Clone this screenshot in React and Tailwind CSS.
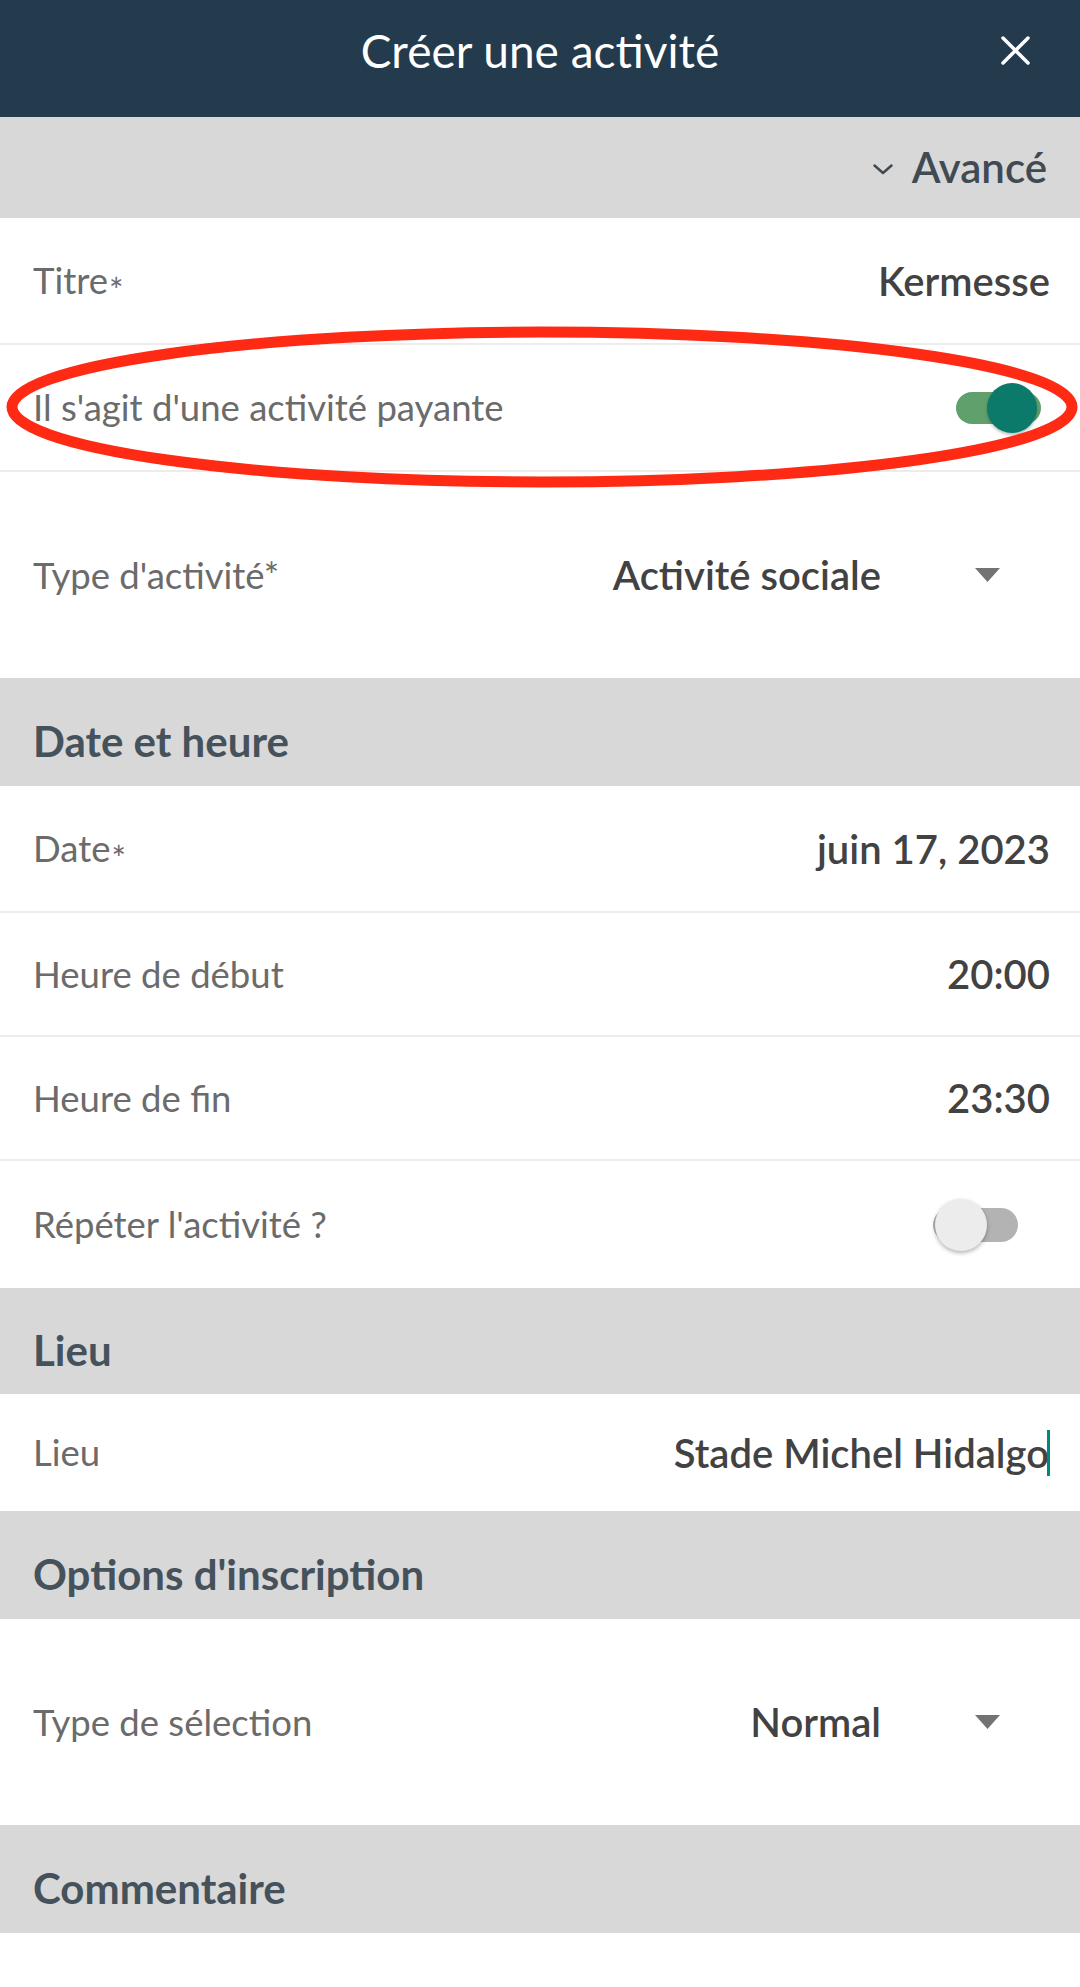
import React from "react";

function Star() {
  return <span className="relative top-[9px] ml-[1px] text-[34px]">*</span>;
}

function Row({ label, value, h = "h-[127px]", children }) {
  return (
    <div className={`flex items-center justify-between ${h} pl-[33px] pr-[30px] border-b-2 border-[#ececec] bg-white`}>
      <span className="text-[36.5px] text-[#6b6b6b]">{label}</span>
      {value !== undefined ? (
        <span className="text-[40px] font-semibold text-[#424242]">{value}</span>
      ) : (
        children
      )}
    </div>
  );
}

function Section({ title, h = "h-[108px]" }) {
  return (
    <div className={`flex items-center ${h} pl-[33px] pt-[18px] bg-[#d8d8d8]`}>
      <span className="text-[42px] font-bold text-[#46525b]">{title}</span>
    </div>
  );
}

function Triangle() {
  return (
    <svg width="25" height="14" viewBox="0 0 25 14">
      <polygon points="0,0 25,0 12.5,14" fill="#737373" />
    </svg>
  );
}

function SelectRow({ label, value }) {
  return (
    <div className="flex items-center justify-between h-[206px] pl-[33px] pr-[80px] bg-white">
      <span className="text-[36.5px] text-[#6b6b6b]">{label}</span>
      <div className="flex items-center">
        <span className="text-[40px] font-semibold text-[#424242]">{value}</span>
        <div className="ml-[94px] flex items-center">
          <Triangle />
        </div>
      </div>
    </div>
  );
}

export default function App() {
  return (
    <div className="relative w-[1080px] min-h-[1987px] bg-white font-['Lato','Noto_Sans',sans-serif] overflow-hidden">
      {/* Header */}
      <div className="h-[117px] bg-[#243a4d]">
        <div className="relative flex h-[100px] items-center justify-center">
          <span className="text-[46px] text-white">Créer une activité</span>
          <div className="absolute right-[50px] top-[36px]">
            <svg width="29" height="29" viewBox="0 0 29 29">
              <line x1="2" y1="2" x2="27" y2="27" stroke="white" strokeWidth="3.5" strokeLinecap="round" />
              <line x1="27" y1="2" x2="2" y2="27" stroke="white" strokeWidth="3.5" strokeLinecap="round" />
            </svg>
          </div>
        </div>
      </div>

      {/* Avancé */}
      <div className="flex h-[101px] items-center justify-end pr-[33px] bg-[#d8d8d8]">
        <svg width="20" height="11" viewBox="0 0 20 11" className="mr-[19px] mt-[4px]">
          <polyline points="1.5,1.5 10,9 18.5,1.5" fill="none" stroke="#3f4a53" strokeWidth="2.5" strokeLinecap="round" strokeLinejoin="round" />
        </svg>
        <span className="text-[42px] font-semibold text-[#3f4a53]">Avancé</span>
      </div>

      <Row label={<>Titre<Star /></>} value="Kermesse" />

      <div className="flex items-center justify-between h-[127px] pl-[33px] pr-[39px] border-b-2 border-[#ececec] bg-white">
        <span className="text-[36.5px] text-[#6b6b6b]">Il s'agit d'une activité payante</span>
        <div className="relative w-[85px] h-[50px] flex items-center">
          <div className="w-[85px] h-[32px] rounded-full bg-[#5fa06c]" />
          <div className="absolute right-[4px] top-0 w-[50px] h-[50px] rounded-full bg-[#0b7a6b] shadow-[0_2px_3px_rgba(0,0,0,0.25)]" />
        </div>
      </div>

      <SelectRow label="Type d'activité*" value="Activité sociale" />

      <Section title="Date et heure" />
      <Row label={<>Date<Star /></>} value="juin 17, 2023" />
      <Row label="Heure de début" value="20:00" h="h-[124px]" />
      <Row label="Heure de fin" value="23:30" h="h-[124px]" />
      <div className="flex items-center justify-between h-[127px] pl-[33px] pr-[62px] bg-white">
        <span className="text-[36.5px] text-[#6b6b6b]">Répéter l'activité ?</span>
        <div className="relative w-[85px] h-[52px] flex items-center">
          <div className="w-[85px] h-[34px] rounded-full bg-[#b3b3b3]" />
          <div className="absolute left-[2px] top-0 w-[52px] h-[52px] rounded-full bg-[#ececec] shadow-[0_2px_4px_rgba(0,0,0,0.3)]" />
        </div>
      </div>

      <Section title="Lieu" h="h-[106px]" />
      <div className="flex items-center justify-between h-[117px] pl-[33px] pr-[30px] bg-white">
        <span className="text-[36.5px] text-[#6b6b6b]">Lieu</span>
        <div className="flex items-center">
          <span className="text-[40px] font-semibold text-[#424242]">Stade Michel Hidalgo</span>
          <span className="ml-[-2px] w-[3px] h-[46px] bg-[#00897b]" />
        </div>
      </div>

      <Section title="Options d'inscription" />
      <SelectRow label="Type de sélection" value="Normal" />
      <Section title="Commentaire" />
      <div className="h-[54px] bg-white" />

      {/* Red annotation ellipse */}
      <svg className="absolute left-0 top-0 pointer-events-none" width="1080" height="520" viewBox="0 0 1080 520">
        <ellipse cx="542" cy="407" rx="530" ry="75" fill="none" stroke="#ff2a14" strokeWidth="11" />
      </svg>
    </div>
  );
}
